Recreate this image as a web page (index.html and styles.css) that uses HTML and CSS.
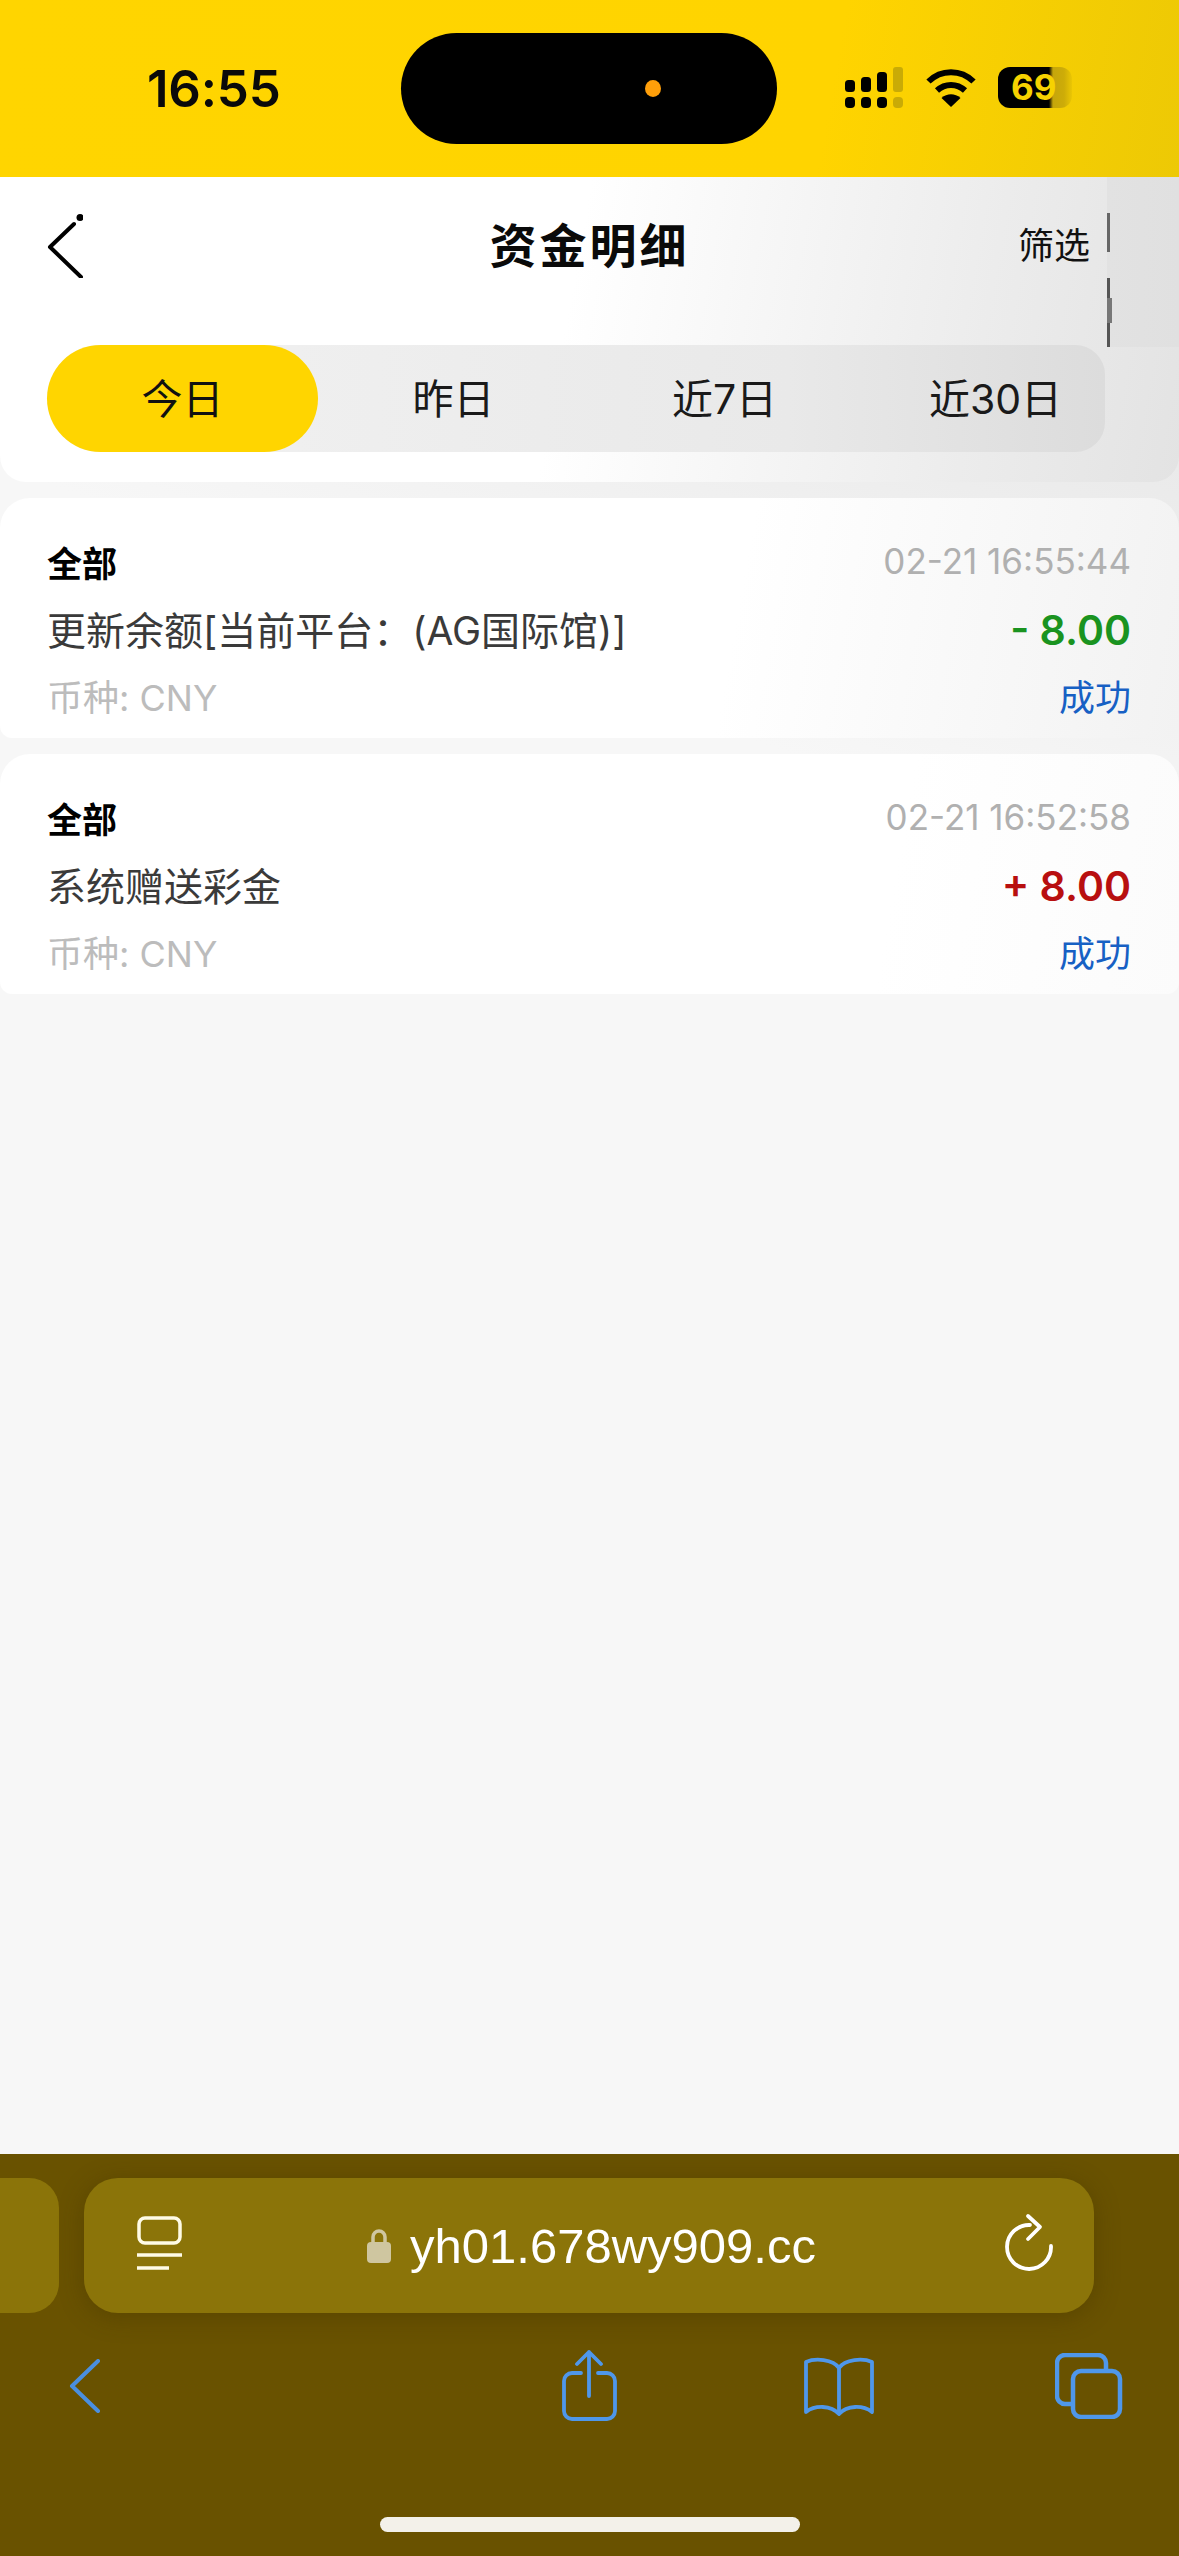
FILE: index.html
```html
<!DOCTYPE html>
<html lang="zh-CN">
<head>
<meta charset="utf-8">
<title>资金明细</title>
<link rel="stylesheet" href="styles.css">
</head>
<body>
<div class="phone">
  <div class="status">
    <div class="time">16:55</div>
    <div class="island"><span class="dot"></span></div>
    <svg class="signal" viewBox="0 0 58 41" width="58" height="41">
      <g fill="#000">
        <rect x="0" y="13" width="10" height="12" rx="3.5"/><rect x="0" y="30" width="10" height="11" rx="4"/>
        <rect x="16" y="10" width="10" height="15" rx="3.5"/><rect x="16" y="30" width="10" height="11" rx="4"/>
        <rect x="32" y="5" width="10" height="20" rx="3.5"/><rect x="32" y="30" width="10" height="11" rx="4"/>
      </g>
      <g fill="#c9ab06">
        <rect x="48" y="0" width="10" height="25" rx="3"/><rect x="48" y="30" width="10" height="11" rx="4"/>
      </g>
    </svg>
    <svg class="wifi" viewBox="0 0 50 39" width="50" height="39">
      <g fill="none" stroke="#000" stroke-width="6">
        <path d="M2.5 13.5C15 1 35 1 47.500 13.500"/>
        <path d="M11 22.500C19 15 31 15 39 22.500"/>
      </g>
      <path d="M15.500 30C21 25 29 25 34.500 30L25 39Z" fill="#000"/>
    </svg>
    <div class="battery">69</div>
  </div>

  <header class="head">
    <div class="head-row">
      <svg class="back" viewBox="0 0 36 64" width="36" height="64">
        <path d="M27 10L3 33L34 63" fill="none" stroke="#000" stroke-width="4" stroke-linecap="round" stroke-linejoin="round"/>
        <circle cx="33" cy="3.500" r="3.500" fill="#000"/>
      </svg>
      <h1 class="title">资金明细</h1>
      <div class="filter">筛选</div>
    </div>
    <div class="tabs">
      <div class="tab tab-on">今日</div>
      <div class="tab">昨日</div>
      <div class="tab">近7日</div>
      <div class="tab">近30日</div>
    </div>
    <span class="seam"></span>
  </header>

  <section class="card card-first">
    <div class="kind">全部</div><div class="date">02-21 16:55:44</div>
    <div class="desc">更新余额[当前平台：(AG国际馆)]</div><div class="amount minus">- 8.00</div>
    <div class="cur">币种: CNY</div><div class="state">成功</div>
  </section>
  <section class="card">
    <div class="kind">全部</div><div class="date">02-21 16:52:58</div>
    <div class="desc">系统赠送彩金</div><div class="amount plus">+ 8.00</div>
    <div class="cur">币种: CNY</div><div class="state">成功</div>
  </section>

  <div class="fill"></div>

  <footer class="bar">
    <div class="url-row">
      <div class="stub"></div>
      <div class="url">
        <svg class="reader" viewBox="0 0 45 54" width="45" height="54">
          <rect x="2" y="2" width="41" height="25" rx="6" fill="none" stroke="#fffbe6" stroke-width="3.500"/>
          <path d="M0 39H45M0 52H32" stroke="#fffbe6" stroke-width="3.500" fill="none"/>
        </svg>
        <div class="addr">
          <svg class="lock" viewBox="0 0 24 35" width="24" height="35">
            <path d="M6 16V9a6 6 0 0 1 12 0v7" fill="none" stroke="#cfc6a0" stroke-width="3.500"/>
            <rect x="0" y="14" width="24" height="21" rx="4" fill="#cfc6a0"/>
          </svg>
          <span>yh01.678wy909.cc</span>
        </div>
        <svg class="reload" viewBox="0 0 52 60" width="52" height="60">
          <path d="M27 13A22 22 0 1 0 48 34" fill="none" stroke="#fff" stroke-width="3.800" stroke-linecap="round"/>
          <path d="M25 4L37 15L25 27" fill="none" stroke="#fff" stroke-width="3.800" stroke-linecap="round" stroke-linejoin="round"/>
        </svg>
      </div>
    </div>
    <div class="tools">
      <svg class="t-back" viewBox="0 0 32 54" width="32" height="54">
        <path d="M29 2L3 27L29 52" fill="none" stroke="#4a8fe0" stroke-width="4" stroke-linecap="round" stroke-linejoin="round"/>
      </svg>
      <svg class="t-share" viewBox="0 0 56 72" width="56" height="72">
        <g fill="none" stroke="#4f97ea" stroke-width="3.800" stroke-linecap="round" stroke-linejoin="round">
          <path d="M20 23H11a8 8 0 0 0-8 8V61a8 8 0 0 0 8 8H46a8 8 0 0 0 8-8V31a8 8 0 0 0-8-8H37"/>
          <path d="M28 46V2M16 14L28 2L40 14"/>
        </g>
      </svg>
      <svg class="t-book" viewBox="0 0 72 60" width="72" height="60">
        <g fill="none" stroke="#4f97ea" stroke-width="3.800" stroke-linejoin="round" stroke-linecap="round">
          <path d="M36 12C30 3 12 2 3 6V56C12 49 28 49 36 58C44 49 60 49 69 56V6C60 2 42 3 36 12Z"/>
          <path d="M36 12V56"/>
        </g>
      </svg>
      <svg class="t-tabs" viewBox="0 0 68 66" width="68" height="66">
        <g fill="none" stroke="#4f97ea" stroke-width="4.500" stroke-linejoin="round">
          <path d="M18 51H10a8 8 0 0 1-8-8V10a8 8 0 0 1 8-8H43a8 8 0 0 1 8 8v7"/>
          <rect x="18" y="18" width="47" height="46" rx="8"/>
        </g>
      </svg>
    </div>
    <div class="home"></div>
  </footer>
</div>
</body>
</html>
```
FILE: styles.css
```css
* { box-sizing: border-box; }
html, body { margin: 0; padding: 0; }
body { width: 1179px; height: 2556px; overflow: hidden; font-family: Inter, "Noto Sans CJK SC", "Liberation Sans", sans-serif; }
.phone { width: 1179px; height: 2556px; display: flex; flex-direction: column; background: linear-gradient(200deg, #dcdcdc 0, #f7f7f7 30%); }

.status { height: 177px; flex: none; display: flex; align-items: flex-start; background: linear-gradient(100deg, #ffd500 0%, #ffd400 70%, #edc905 100%); }
.time { margin: 61px 0 0 147px; width: 254px; font-size: 51px; line-height: 56px; font-weight: 600; color: #0a0a0a; letter-spacing: -0.2px; }
.island { width: 376px; height: 111px; margin-top: 33px; border-radius: 56px; background: #000; position: relative; flex: none; }
.dot { position: absolute; left: 244px; top: 47px; width: 16px; height: 17px; border-radius: 50%; background: #ff9f0a; }
.signal { margin: 67px 0 0 68px; flex: none; }
.wifi { margin: 68px 0 0 23px; flex: none; }
.battery { margin: 67px 0 0 22px; width: 74px; height: 41px; padding-left: 13px; border-radius: 12px; background: linear-gradient(90deg, #000 0 51px, #c5a60b 55px, #cdac08 66px, #eac604 74px); font-size: 35px; line-height: 41px; font-weight: 700; color: #f6d200; flex: none; }

.head { flex: none; height: 305px; padding-top: 36px; background: linear-gradient(100deg, #fff 0%, #fff 48%, #ececec 82%, #e3e3e3 100%); border-radius: 0 0 26px 26px; position: relative; }
.head-row { display: grid; grid-template-columns: 1fr auto 1fr; align-items: center; height: 64px; padding: 0 47px; }
.back { display: block; }
.title { margin: 0; font-size: 47px; line-height: 66px; font-weight: 700; letter-spacing: 3px; color: #0a0a0a; }
.filter { justify-self: end; margin-right: 42px; font-size: 36px; line-height: 64px; color: #111; }
.tabs { margin: 68px 0 0 47px; width: 1058px; height: 107px; display: grid; grid-template-columns: repeat(4, 271px); border-radius: 54px 30px 30px 54px; background: linear-gradient(90deg, #f2f2f2, #e9e9e9 70%, #dcdcdc); }
.tab { display: flex; align-items: center; justify-content: center; padding-bottom: 6px; font-size: 41px; color: #1a1a1a; border-radius: 54px; }
.tab-on { background: #ffd500; color: #111; }
.seam { position: absolute; left: 1107px; top: 0; width: 72px; height: 170px; background: linear-gradient(90deg, #e2e2e2, #e0e0e0); }
.seam::before { content: ""; position: absolute; left: 0; top: 36px; width: 3px; height: 134px; background: linear-gradient(180deg, #666 0 39px, transparent 39px 65px, #555 65px 134px); }
.seam::after { content: ""; position: absolute; left: 0; top: 121px; width: 5px; height: 25px; background: #777; }

.card { flex: none; margin-top: 16px; height: 240px; padding: 39px 48px 0 47px; display: grid; grid-template-columns: 1fr auto; grid-auto-rows: 48px; row-gap: 19px; align-items: center; border-radius: 30px 30px 12px 12px; background: linear-gradient(100deg, #fff 0%, #fff 75%, #fbfbfb 100%); }
.card-first { background: linear-gradient(100deg, #fff 0%, #fff 62%, #f2f2f2 100%); }
.kind { font-size: 35px; font-weight: 700; color: #000; }
.date { font-size: 35px; color: #b0b0b0; text-align: right; }
.desc { font-size: 39px; color: #3a3a3a; }
.amount { margin-top: 3px; font-size: 41px; font-weight: 600; text-align: right; }
.minus { color: #1a9320; }
.plus { color: #b80f0f; }
.cur { font-size: 36px; color: #bcbcbc; }
.state { font-size: 36px; color: #1760c4; text-align: right; }

.fill { flex: 1; }

.bar { flex: none; height: 402px; padding-top: 24px; background: #695200; display: flex; flex-direction: column; }
.url-row { height: 135px; display: flex; gap: 25px; flex: none; }
.stub { width: 59px; border-radius: 0 30px 30px 0; background: #8b7409; }
.url { width: 1010px; border-radius: 34px; background: #8b7409; box-shadow: 0 4px 24px rgba(60, 45, 0, .35); display: flex; align-items: center; padding: 0 39px 0 53px; }
.reader { flex: none; margin-top: -6px; }
.addr { flex: 1; display: flex; align-items: center; justify-content: center; gap: 19px; font-family: "Liberation Sans", Arial, sans-serif; font-size: 49px; color: #fff; padding-right: 2px; }
.lock { flex: none; }
.reload { flex: none; margin-top: -8px; }
.tools { display: flex; align-items: center; height: 72px; margin-top: 37px; flex: none; }
.t-back { margin-left: 69px; }
.t-share { margin-left: 460px; }
.t-book { margin-left: 186px; }
.t-tabs { margin-left: 180px; }
.home { width: 420px; height: 15px; margin: 95px 0 0 380px; border-radius: 8px; background: #f3f1ea; flex: none; }
```
